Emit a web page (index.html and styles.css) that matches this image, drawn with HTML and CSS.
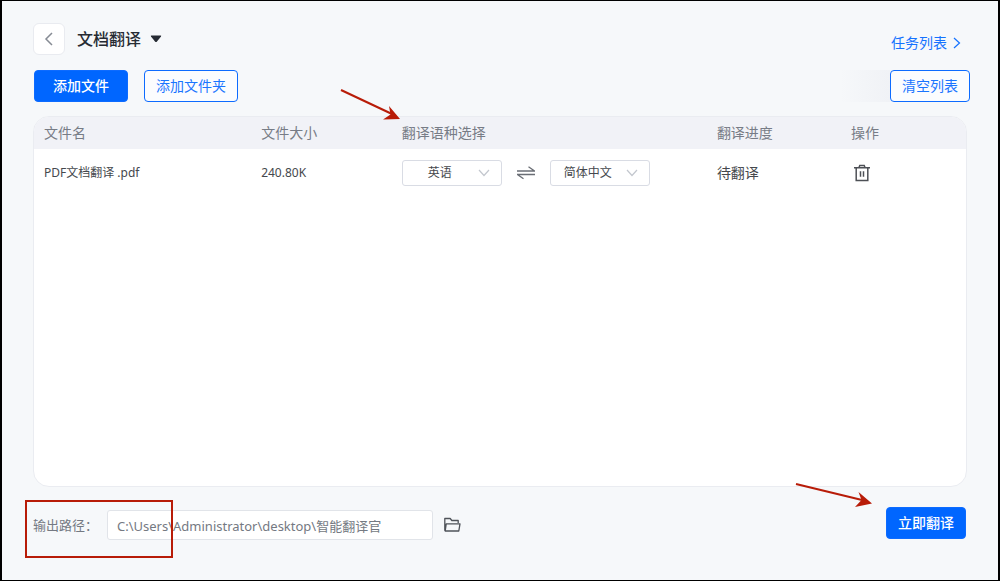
FILE: index.html
```html
<!DOCTYPE html>
<html lang="zh-CN">
<head>
<meta charset="utf-8">
<meta name="viewport" content="width=device-width, initial-scale=1">
<title>文档翻译</title>
<link rel="stylesheet" href="styles.css">
</head>
<body>
<main class="window">
  <header class="header">
    <button class="back" type="button" aria-label="返回">
      <svg width="10" height="14" viewBox="0 0 10 14"><path d="M8 1 2 7l6 6" fill="none" stroke="#868b94" stroke-width="1.5"/></svg>
    </button>
    <button class="title" type="button">文档翻译
      <svg width="12" height="8" viewBox="0 0 12 8"><path d="M1.5.5h9q1.200 0 .5 1L6.800 6.700q-.800.800-1.600 0L1 1.500q-.700-1 .5-1z" fill="#262b33"/></svg>
    </button>
    <a class="tasks" href="#">任务列表
      <svg width="8" height="12" viewBox="0 0 8 12"><path d="m1 1 5.500 5L1 11" fill="none" stroke="#1472ff" stroke-width="1.200"/></svg>
    </a>
  </header>

  <div class="toolbar">
    <button class="btn btn-primary btn-add" type="button">添加文件</button>
    <button class="btn btn-outline btn-add" type="button">添加文件夹</button>
    <span class="fade"></span>
    <button class="btn btn-outline btn-small" type="button">清空列表</button>
  </div>

  <section class="card">
    <table class="files">
      <colgroup><col class="col-name"><col class="col-size"><col class="col-lang"><col class="col-progress"><col></colgroup>
      <thead>
        <tr><th>文件名</th><th>文件大小</th><th>翻译语种选择</th><th>翻译进度</th><th>操作</th></tr>
      </thead>
      <tbody>
        <tr>
          <td class="small">PDF文档翻译 .pdf</td>
          <td class="small">240.80K</td>
          <td>
            <div class="langs">
              <span class="picker">
                <select aria-label="源语言"><option>英语</option></select>
                <svg class="chevron" width="12" height="8" viewBox="0 0 12 8"><path d="m1 1 5 5.500L11 1" fill="none" stroke="#c3c7ce" stroke-width="1.200"/></svg>
              </span>
              <button class="icon" type="button" aria-label="交换语言">
                <svg width="18" height="14" viewBox="0 0 18 14"><path d="M0 5h17.500L11.500.8M18 8.500H.5L6.500 12.800" fill="none" stroke="#6a6e75" stroke-width="1.300"/></svg>
              </button>
              <span class="picker">
                <select aria-label="目标语言"><option>简体中文</option></select>
                <svg class="chevron" width="12" height="8" viewBox="0 0 12 8"><path d="m1 1 5 5.500L11 1" fill="none" stroke="#c3c7ce" stroke-width="1.200"/></svg>
              </span>
            </div>
          </td>
          <td>待翻译</td>
          <td>
            <button class="icon trash" type="button" aria-label="删除">
              <svg width="16" height="18" viewBox="0 0 16 18"><path d="M0 3.700h16M2.200 3.700v12.800h11.600V3.700M5 3.500l.8-2h4.400l.8 2M6.500 7.200v5.600M9.500 7.200v5.600" fill="none" stroke="#4d5056" stroke-width="1.500"/></svg>
            </button>
          </td>
        </tr>
      </tbody>
    </table>
  </section>

  <footer class="footer">
    <label class="path-label" for="path">输出路径：</label>
    <input class="path" id="path" type="text" value="C:\Users\Administrator\desktop\智能翻译官">
    <button class="icon" type="button" aria-label="选择文件夹">
      <svg width="17" height="16" viewBox="0 0 17 16"><path d="M1.500 14 .8 13.200V1.500h5.400l1.600 2h6.400V6M1.200 14 2.200 6.800h13.800L14.800 14z" fill="none" stroke="#4f5359" stroke-width="1.300" stroke-linejoin="round"/></svg>
    </button>
    <button class="btn btn-primary btn-small start" type="button">立即翻译</button>
  </footer>

  <svg class="mark mark-language" width="62" height="34" viewBox="0 0 62 34"><path d="M1 2 52 26" stroke="#b81c08" stroke-width="2"/><path d="m60 31-17 .5 7.500-5L49 18z" fill="#b81c08"/></svg>
  <svg class="mark mark-start" width="78" height="26" viewBox="0 0 78 26"><path d="m1 2 66 16" stroke="#b81c08" stroke-width="2"/><path d="M77 21.500 60 25l6.500-7L63.500 10z" fill="#b81c08"/></svg>
  <div class="mark mark-path"></div>
</main>
</body>
</html>
```
FILE: styles.css
```css
* { box-sizing: border-box; }

body {
  margin: 0;
  background: #000;
  font-family: "Noto Sans", "Noto Sans CJK SC", sans-serif;
  font-size: 14px;
  line-height: 20px;
}

button, input, select { font: inherit; }
button { padding: 0; cursor: pointer; }
svg { display: block; }

.window {
  position: relative;
  display: flex;
  flex-direction: column;
  min-height: 100vh;
  padding: 22px 31px 40px 31px;
  border: solid #000;
  border-width: 1px 2px;
  background: #f6f8fa;
}

.header { display: flex; align-items: center; height: 32px; }

.back {
  display: grid;
  place-items: center;
  width: 32px;
  height: 32px;
  border: 1px solid #e9ebf0;
  border-radius: 6px;
  background: #fff;
}

.title {
  display: flex;
  align-items: center;
  gap: 9px;
  margin-left: 12px;
  border: 0;
  background: none;
  color: #262b33;
  font-size: 16px;
  font-weight: 500;
}

.tasks {
  display: flex;
  align-items: center;
  gap: 6px;
  margin: 8px 6px 0 auto;
  color: #1472ff;
  text-decoration: none;
}

.toolbar { display: flex; align-items: center; margin: 15px -3px 14px 1px; }

.btn {
  height: 32px;
  border: 1px solid #0d6bff;
  border-radius: 4px;
}
.btn-primary { background: #06f; color: #fff; font-weight: 500; }
.btn-outline { background: #fbfcfe; color: #1a75ff; }
.btn-add { width: 94px; margin-right: 16px; }
.btn-small { width: 80px; }

.fade {
  width: 50px;
  height: 32px;
  margin-left: auto;
  background: linear-gradient(90deg, #f6f8fa, #f0f2f6);
}

.card {
  flex: 1;
  overflow: hidden;
  border: 1px solid #eaecf1;
  border-radius: 16px;
  background: #fff;
}

.files { width: 100%; border-collapse: collapse; table-layout: fixed; }
.files th, .files td { padding: 0 0 0 10px; text-align: left; }
.files th { height: 32px; background: #f1f2f7; color: #777c86; font-weight: 400; }
.files td { height: 48px; color: #45484d; }
.files .small { font-size: 12px; }
.col-name { width: 23.3%; }
.col-size { width: 15.1%; }
.col-lang { width: 33.8%; }
.col-progress { width: 14.4%; }

.langs { display: flex; align-items: center; gap: 15px; }
.picker { position: relative; width: 100px; }
.picker select {
  display: block;
  width: 100%;
  height: 26px;
  padding: 0 24px 0 0;
  border: 1px solid #d9dce4;
  border-radius: 3px;
  appearance: none;
  background: #fff;
  color: #45484d;
  font-size: 12px;
  text-align: center;
}
.chevron { position: absolute; top: 9px; right: 12px; pointer-events: none; }

.icon { border: 0; background: none; }
.trash { display: block; margin-left: 3px; }

.footer { display: flex; align-items: center; margin-top: 23px; font-size: 13px; }
.path-label { width: 74px; color: #747982; white-space: nowrap; }
.path {
  width: 326px;
  height: 30px;
  margin-right: 11px;
  padding: 0 9px;
  border: 1px solid #e1e4e9;
  border-radius: 3px;
  background: #fff;
  color: #747982;
}
.start { margin: -4px 1px 0 auto; font-size: 14px; }

.mark { position: absolute; pointer-events: none; }
.mark-language { top: 87px; left: 338px; }
.mark-start { top: 481px; left: 793px; }
.mark-path { top: 499px; left: 23px; width: 148px; height: 58px; border: 2px solid #b81c08; }
```
